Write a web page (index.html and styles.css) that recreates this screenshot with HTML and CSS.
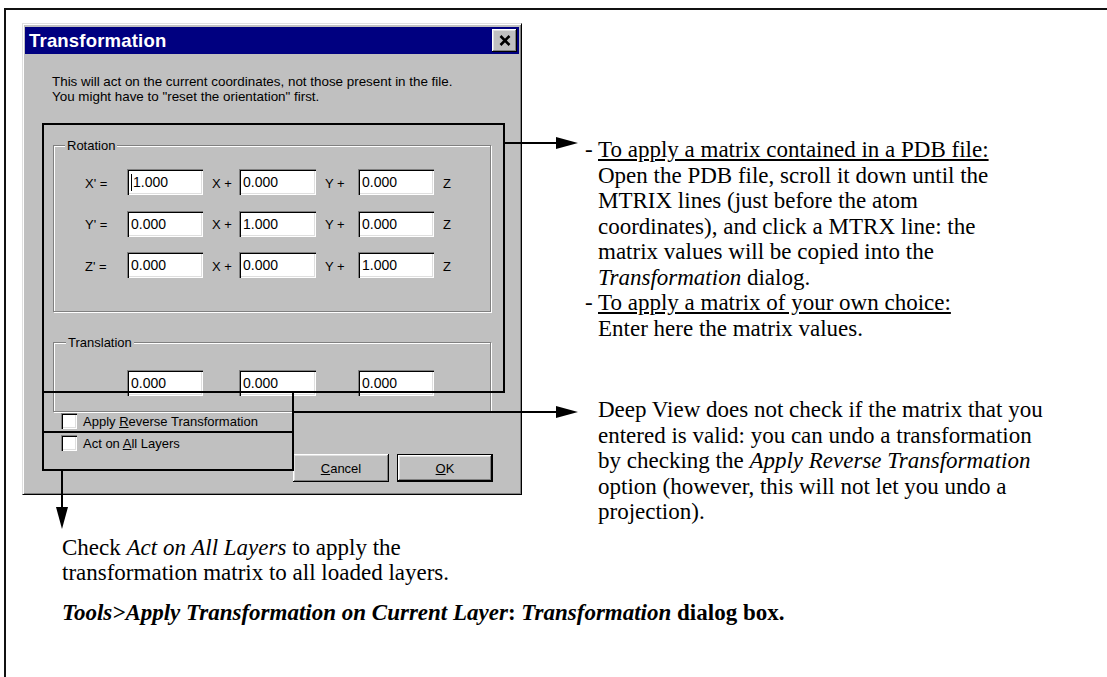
FILE: index.html
```html
<html>
<head>
<title>Transformation</title>
<link rel="stylesheet" href="styles.css">
</head>
<body>
<div class="frame">
  <div class="top">
    <div class="dialog">
      <div class="titlebar">
        <span class="title">Transformation</span>
        <span class="close"><svg width="12" height="11" viewBox="0 0 12 11"><path d="M1.5 1 L10.5 10 M10.5 1 L1.5 10" stroke="#000" stroke-width="2.6" fill="none"/></svg></span>
      </div>
      <div class="dialog-body">
        <p class="intro">This will act on the current coordinates, not those present in the file.<br>You might have to "reset the orientation" first.</p>

        <div class="group rotation">
          <span class="legend">Rotation</span>
          <div class="matrix">
            <span class="lbl">X' =</span><span class="field"><i class="caret"></i>1.000</span>
            <span class="op">X +</span><span class="field">0.000</span>
            <span class="op">Y +</span><span class="field">0.000</span>
            <span class="op">Z</span>

            <span class="lbl">Y' =</span><span class="field">0.000</span>
            <span class="op">X +</span><span class="field">1.000</span>
            <span class="op">Y +</span><span class="field">0.000</span>
            <span class="op">Z</span>

            <span class="lbl">Z' =</span><span class="field">0.000</span>
            <span class="op">X +</span><span class="field">0.000</span>
            <span class="op">Y +</span><span class="field">1.000</span>
            <span class="op">Z</span>
          </div>
        </div>

        <div class="group translation">
          <span class="legend">Translation</span>
          <div class="matrix">
            <span class="lbl"></span><span class="field">0.000</span>
            <span class="op"></span><span class="field">0.000</span>
            <span class="op"></span><span class="field">0.000</span>
            <span class="op"></span>
          </div>
        </div>

        <div class="checks">
          <div class="check"><span class="box"></span><span>Apply <u>R</u>everse Transformation</span></div>
          <div class="check"><span class="box"></span><span>Act on <u>A</u>ll Layers</span></div>
        </div>

        <div class="buttons">
          <span class="btn"><span><u>C</u>ancel</span></span>
          <span class="btn default"><span><u>O</u>K</span></span>
        </div>
      </div>
    </div>

    <div class="notes">
      <p class="item">- <u>To apply a matrix contained in a PDB file:</u><br>Open the PDB file, scroll it down until the<br>MTRIX lines (just before the atom<br>coordinates), and click a MTRX line: the<br>matrix values will be copied into the<br><i>Transformation</i> dialog.</p>
      <p class="item">- <u>To apply a matrix of your own choice:</u><br>Enter here the matrix values.</p>
      <p class="warn">Deep View does not check if the matrix that you<br>entered is valid: you can undo a transformation<br>by checking the <i>Apply Reverse Transformation</i><br>option (however, this will not let you undo a<br>projection).</p>
    </div>
  </div>

  <p class="check-note">Check <i>Act on All Layers</i> to apply the<br>transformation matrix to all loaded layers.</p>
  <p class="caption"><i>Tools&gt;Apply Transformation on Current Layer</i>: <i>Transformation</i> dialog box.</p>
</div>

<svg class="callouts" width="1107" height="677" viewBox="0 0 1107 677">
  <g fill="none" stroke="#000" stroke-width="2">
    <rect x="43" y="124" width="461" height="268"/>
    <rect x="43" y="392" width="250" height="40"/>
    <rect x="43" y="432" width="250" height="38"/>
    <line x1="504" y1="143" x2="560" y2="143"/>
    <line x1="293" y1="412" x2="560" y2="412"/>
    <line x1="62" y1="470" x2="62" y2="510"/>
  </g>
  <g fill="#000">
    <polygon points="556,137 578,143 556,149"/>
    <polygon points="556,406 578,412 556,418"/>
    <polygon points="56,507 62,529 68,507"/>
  </g>
</svg>
</body>
</html>
```

FILE: styles.css
```css
body {
  margin: 0;
  background: #ffffff;
  overflow: hidden;
  font-family: "Liberation Sans", Arial, sans-serif;
}

.frame {
  margin: 8px 0 0 4px;
  border-top: 2px solid #111;
  border-left: 2px solid #111;
  height: 654px;
  padding: 13px 0 0 16px;
  box-sizing: content-box;
}

.top {
  display: flex;
}

/* the win95 dialog */

.dialog {
  width: 500px;
  height: 472px;
  flex: none;
  box-sizing: border-box;
  background: #c0c0c0;
  border: 1px solid;
  border-color: #dfdfdf #000000 #000000 #dfdfdf;
  box-shadow: inset 1px 1px 0 #ffffff, inset -1px -1px 0 #808080;
  padding: 3px 2px 0 2px;
}

.titlebar {
  display: flex;
  align-items: center;
  justify-content: space-between;
  height: 27px;
  background: #000080;
  color: #ffffff;
  padding: 0 2px 0 4px;
}

.title {
  font-weight: bold;
  font-size: 18.5px;
  letter-spacing: 0.2px;
}

.close {
  width: 25px;
  height: 23px;
  display: flex;
  align-items: center;
  justify-content: center;
  background: #c0c0c0;
  box-shadow: inset -1px -1px 0 #000, inset 1px 1px 0 #fff, inset -2px -2px 0 #808080, inset 2px 2px 0 #dfdfdf;
}

.dialog-body {
  padding: 20px 26px 0 27px;
  font-size: 13px;
  color: #000;
}

.intro {
  margin: 0;
  font-size: 13.4px;
  line-height: 15px;
}

.group {
  position: relative;
  width: 438px;
  box-sizing: border-box;
  margin-left: 1px;
  border: 1px solid #808080;
  box-shadow: inset 1px 1px 0 #fff, 1px 1px 0 #fff;
}

.rotation {
  margin-top: 41px;
  height: 167px;
  padding: 23px 0 0 31px;
}

.translation {
  margin-top: 30px;
  height: 70px;
  padding: 27px 0 0 31px;
}

.legend {
  position: absolute;
  top: -8px;
  left: 11px;
  padding: 0 2px;
  background: #c0c0c0;
  line-height: 15px;
}

.translation .legend {
  left: 12px;
}

.matrix {
  display: grid;
  grid-template-columns: 42px 76px 36px 77px 42px 76px auto;
  row-gap: 15.5px;
  align-items: center;
}

.lbl {
  padding-top: 2px;
}

.op {
  padding-left: 9px;
  padding-top: 2px;
}

.field {
  height: 26px;
  box-sizing: border-box;
  background: #fff;
  padding: 4px 0 0 4px;
  font-size: 14px;
  line-height: 18px;
  box-shadow: inset 1px 1px 0 #808080, inset 2px 2px 0 #000, inset -1px -1px 0 #fff, inset -2px -2px 0 #dfdfdf;
}

.caret {
  display: inline-block;
  width: 1px;
  height: 17px;
  background: #000;
  vertical-align: -4px;
  margin-right: 1px;
}

.checks {
  display: flex;
  flex-direction: column;
  gap: 4px;
}

.check {
  display: flex;
  align-items: center;
  height: 18px;
  margin-left: 9px;
}

.box {
  width: 16px;
  height: 16px;
  margin-right: 6px;
  background: #fff;
  box-shadow: inset 1px 1px 0 #808080, inset 2px 2px 0 #000, inset -1px -1px 0 #fff, inset -2px -2px 0 #dfdfdf;
}

.buttons {
  display: flex;
  justify-content: flex-end;
  gap: 8px;
  margin-top: 2px;
}

.btn {
  width: 96px;
  height: 28px;
  box-sizing: border-box;
  display: flex;
  align-items: center;
  justify-content: center;
  background: #c0c0c0;
  box-shadow: inset -1px -1px 0 #000, inset 1px 1px 0 #fff, inset -2px -2px 0 #808080, inset 2px 2px 0 #dfdfdf;
}

.btn.default {
  border: 1px solid #000;
}

/* the explanations */

.notes {
  padding-left: 76px;
  font-family: "Liberation Serif", "Times New Roman", serif;
  font-size: 23px;
  line-height: 25.5px;
  color: #000;
  white-space: nowrap;
}

.item {
  margin: 0;
  text-indent: -13px;
}

.item:first-child {
  margin-top: 114px;
}

.warn {
  margin: 56px 0 0 0;
}

.check-note {
  margin: 10px 0 0 40px;
  font-family: "Liberation Serif", "Times New Roman", serif;
  font-size: 23px;
  line-height: 25.5px;
}

.caption {
  margin: 14px 0 0 40px;
  font-family: "Liberation Serif", "Times New Roman", serif;
  font-size: 23px;
  font-weight: bold;
  line-height: 26px;
}

.callouts {
  position: absolute;
  top: 0;
  left: 0;
  pointer-events: none;
}
```
